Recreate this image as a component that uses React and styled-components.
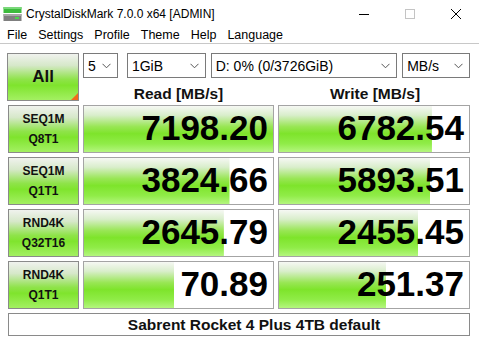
import React from 'react';
import styled, { createGlobalStyle } from 'styled-components';

const GlobalStyle = createGlobalStyle`
  html, body {
    margin: 0;
    padding: 0;
    background: #fff;
    font-family: "Liberation Sans", Arial, sans-serif;
  }
`

const Window = styled.div`
  width: 479px;
  height: 344px;
  background: #fff;
  overflow: hidden;
`

const TitleBar = styled.div`
  height: 27px;
  display: flex;
  align-items: center;
  padding-left: 3px;
`

const Title = styled.div`
  font-size: 12px;
  color: #000;
  margin-left: 4px;
  flex: 1;
`

const Controls = styled.div`
  display: flex;
  align-items: center;
  height: 100%;
`

const Ctrl = styled.div`
  width: 46px;
  height: 100%;
  display: flex;
  align-items: center;
  justify-content: center;
`

const MenuBar = styled.div`
  height: 16px;
  display: flex;
  align-items: center;
  padding-left: 7px;
  gap: 11px;
  font-size: 12.5px;
  border-bottom: 1px solid #c8c8c8;
`

const MenuItem = styled.span`
  color: #000;
`

const Board = styled.div`
  display: grid;
  grid-template-columns: 72px 191px 192px;
  grid-template-rows: repeat(5, 48px) 23px;
  column-gap: 4px;
  row-gap: 4px;
  padding: 9px 0 0 7px;
  & > :nth-child(3n+3) { margin-left: 1px; }
`

const greenGrad = `linear-gradient(to bottom, #f6f8f4 0%, #d9eecb 20%, #98e654 45%, #7ee42b 60%, #90ec48 82%, #b4f67e 100%)`

const TestButton = styled.div`
  box-sizing: border-box;
  border: 1px solid #8a8a8a;
  background: linear-gradient(to bottom, #f0f2ee 0%, #d6e8c9 25%, #8fe34a 55%, #7fe42d 68%, #a3f062 100%);
  display: flex;
  flex-direction: column;
  align-items: center;
  justify-content: center;
  font-weight: bold;
  font-size: ${p => p.$big ? '17px' : '12px'};
  line-height: 20px;
  color: #111;
  position: relative;
  overflow: hidden;
`

const Corner = styled.div`
  position: absolute;
  right: 0;
  bottom: 0;
  width: 0;
  height: 0;
  border-left: 7px solid transparent;
  border-bottom: 7px solid #f26b1d;
`

const HeadCell = styled.div`
  grid-column: 2 / span 2;
  display: flex;
  flex-direction: column;
`

const Selects = styled.div`
  display: flex;
  height: 25px;
`

const Select = styled.div`
  box-sizing: border-box;
  width: ${p => p.$w}px;
  margin-left: ${p => p.$ml || 0}px;
  height: 25px;
  border: 1px solid #7a7a7a;
  display: flex;
  align-items: center;
  justify-content: space-between;
  padding: 0 6px 0 4px;
  font-size: 14px;
  color: #000;
`

const Labels = styled.div`
  display: grid;
  grid-template-columns: 191px 192px;
  column-gap: 5px;
  flex: 1;
`

const ColLabel = styled.div`
  text-align: center;
  font-weight: bold;
  font-size: 15.5px;
  padding-top: 7px;
  color: #111;
`

const Result = styled.div`
  box-sizing: border-box;
  border: 1px solid #a4a4a4;
  background-color: #fff;
  background-image: ${greenGrad};
  background-repeat: no-repeat;
  background-size: ${p => p.$fill}% 100%;
  display: flex;
  align-items: center;
  justify-content: flex-end;
  padding: 0 5px 3px 0;
  font-weight: bold;
  font-size: 35px;
  color: #000;
`

const Comment = styled.div`
  grid-column: 1 / span 3;
  box-sizing: border-box;
  border: 1px solid #8a8a8a;
  display: flex;
  align-items: center;
  justify-content: center;
  padding-left: 30px;
  font-weight: bold;
  font-size: 15.5px;
  color: #111;
`

const Chevron = () => (
  <svg width="9" height="6" viewBox="0 0 9 6">
    <path d="M0.5 0.8 L4.5 4.8 L8.5 0.8" fill="none" stroke="#555" strokeWidth="1" />
  </svg>
)

const AppIcon = () => (
  <svg width="19" height="16" viewBox="0 0 19 16">
    <rect x="0.5" y="1" width="18" height="6" fill="#3dbb3d" />
    <rect x="0.5" y="1" width="18" height="2" fill="#7ad87a" />
    <rect x="0.5" y="8" width="18" height="7" fill="#7f7f7f" />
    <rect x="0.5" y="8" width="18" height="2" fill="#a8a8a8" />
    <rect x="12" y="11" width="4" height="2" fill="#4cd44c" />
  </svg>
)

const rows = [
  { a: 'SEQ1M', b: 'Q8T1', read: '7198.20', rf: 100, write: '6782.54', wf: 80.5 },
  { a: 'SEQ1M', b: 'Q1T1', read: '3824.66', rf: 77, write: '5893.51', wf: 79.5 },
  { a: 'RND4K', b: 'Q32T16', read: '2645.79', rf: 74, write: '2455.45', wf: 73.2 },
  { a: 'RND4K', b: 'Q1T1', read: '70.89', rf: 47.7, write: '251.37', wf: 56.3 },
]

const App = () => {
  return (
    <Window>
      <GlobalStyle />
      <TitleBar>
        <AppIcon />
        <Title>CrystalDiskMark 7.0.0 x64 [ADMIN]</Title>
        <Controls>
          <Ctrl>
            <svg width="10" height="10" viewBox="0 0 10 10"><path d="M0 5.5 H10" stroke="#000" strokeWidth="1" /></svg>
          </Ctrl>
          <Ctrl>
            <svg width="10" height="10" viewBox="0 0 10 10"><rect x="0.5" y="0.5" width="9" height="9" fill="none" stroke="#c4c4c4" /></svg>
          </Ctrl>
          <Ctrl>
            <svg width="10" height="10" viewBox="0 0 10 10"><path d="M0 0 L10 10 M10 0 L0 10" stroke="#000" strokeWidth="1" /></svg>
          </Ctrl>
        </Controls>
      </TitleBar>
      <MenuBar>
        <MenuItem>File</MenuItem>
        <MenuItem>Settings</MenuItem>
        <MenuItem>Profile</MenuItem>
        <MenuItem>Theme</MenuItem>
        <MenuItem>Help</MenuItem>
        <MenuItem>Language</MenuItem>
      </MenuBar>
      <Board>
        <TestButton $big>
          All
          <Corner />
        </TestButton>
        <HeadCell>
          <Selects>
            <Select $w={35}>5<Chevron /></Select>
            <Select $w={79} $ml={9}>1GiB<Chevron /></Select>
            <Select $w={187} $ml={5}>D: 0% (0/3726GiB)<Chevron /></Select>
            <Select $w={68} $ml={5}>MB/s<Chevron /></Select>
          </Selects>
          <Labels>
            <ColLabel>Read [MB/s]</ColLabel>
            <ColLabel>Write [MB/s]</ColLabel>
          </Labels>
        </HeadCell>
        {rows.map(r => (
          <React.Fragment key={r.a + r.b}>
            <TestButton>
              <span>{r.a}</span>
              <span>{r.b}</span>
            </TestButton>
            <Result $fill={r.rf}>{r.read}</Result>
            <Result $fill={r.wf}>{r.write}</Result>
          </React.Fragment>
        ))}
        <Comment>Sabrent Rocket 4 Plus 4TB default</Comment>
      </Board>
    </Window>
  );
}

export default App;
